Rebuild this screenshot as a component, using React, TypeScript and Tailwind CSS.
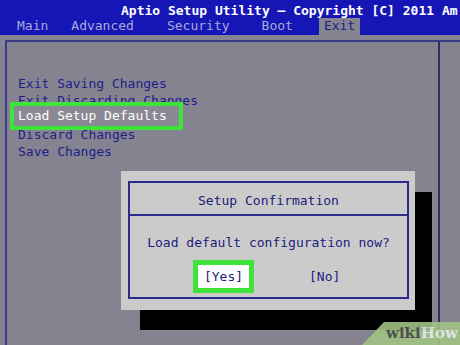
import React from "react";

export default function App() {
  const items = [
    "Exit Saving Changes",
    "Exit Discarding Changes",
    "Load Setup Defaults",
    "Discard Changes",
    "Save Changes",
  ];
  return (
    <div className="relative w-[460px] h-[345px] overflow-hidden bg-[#84838f] font-['DejaVu_Sans_Mono','Liberation_Mono',monospace] text-[13px]">
      {/* header */}
      <header className="h-[35px] bg-[#1616b6] flex flex-col">
        <div className="h-[19px] pl-[121px] pt-[2px] leading-[17px] text-white whitespace-nowrap font-bold">
          Aptio Setup Utility – Copyright [C] 2011 Am
        </div>
        <nav className="flex h-[16px] items-end leading-[16px] text-[#a9acd6] whitespace-nowrap">
          <span className="ml-[17px] pb-[1px]">Main</span>
          <span className="ml-[23px] pb-[1px]">Advanced</span>
          <span className="ml-[33px] pb-[1px]">Security</span>
          <span className="ml-[32px] pb-[1px]">Boot</span>
          <span className="ml-[26px] h-[17px] px-[5px] bg-[#85848f] text-[#1e1e88]">Exit</span>
        </nav>
      </header>

      {/* body */}
      <div className="pt-[5px] pl-[5px] h-[310px]">
        <div className="flex h-full border-l-2 border-t-2 border-[#3a3a86]">
          <div className="w-[433px] border-r-2 border-[#2e2e6c] pt-[33px] pl-[11px]">
            {items.map((t, i) =>
              i === 2 ? (
                <div key={t} className="relative h-[17px] z-10">
                  <div className="absolute left-[-8px] top-[-7px] w-[173px] h-[28px] border-4 border-[#3ee43a] bg-[#8a8994] pl-[4px] leading-[20px] text-white whitespace-nowrap">
                    {t}
                  </div>
                </div>
              ) : (
                <div key={t} className="h-[17px] leading-[17px] text-[#1e1e8a] whitespace-nowrap">
                  {t}
                </div>
              )
            )}
          </div>
          <div className="flex-1" />
        </div>
      </div>

      {/* dialog shadow */}
      <div className="absolute left-[140px] top-[192px] w-[292px] h-[138px] bg-black" />
      {/* dialog */}
      <div className="absolute left-[121px] top-[171px] w-[294px] h-[139px] bg-[#cbcbcc] pt-[10px] pl-[7px]">
        <div className="w-[281px] h-[118px] border-2 border-[#2c2a8a] flex flex-col text-[#1c1c7c]">
          <div className="h-[33px] border-b-2 border-[#2c2a8a] flex items-center justify-center leading-[17px] pt-[3px]">
            Setup Confirmation
          </div>
          <div className="mt-[18px] text-center leading-[17px] whitespace-nowrap">
            Load default configuration now?
          </div>
          <div className="mt-[9px] flex items-center pl-[63px]">
            <div className="w-[61px] h-[33px] border-[5px] border-[#3ee43a] bg-white flex items-center justify-center leading-[17px]">
              [Yes]
            </div>
            <span className="ml-[55px] leading-[17px]">[No]</span>
          </div>
        </div>
      </div>

      {/* watermark */}
      <div className="absolute left-[362px] top-[322px] w-[98px] h-[23px] bg-[#9fc283] [clip-path:polygon(22px_0,100%_0,100%_100%,0_100%)] opacity-90 flex items-center pl-[24px] font-['DejaVu_Serif',serif] font-bold text-[15px] leading-[23px]">
        <span className="text-[#4a4a4a]">wiki</span>
        <span className="text-[#e8eef0]">How</span>
      </div>
    </div>
  );
}
